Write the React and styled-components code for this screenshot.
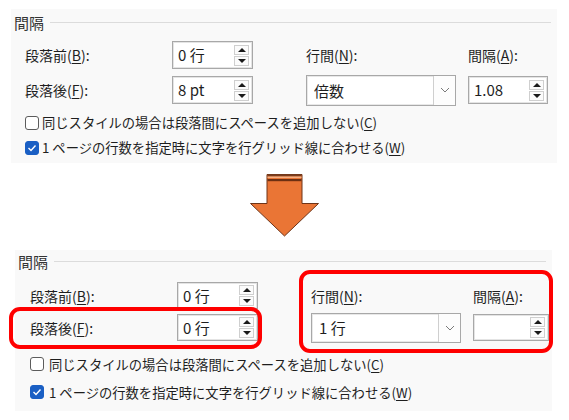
import React from "react";
import styled, { createGlobalStyle } from "styled-components";

const Global = createGlobalStyle`
  html, body { margin: 0; padding: 0; background: #ffffff; }
  body { font-family: "Noto Sans CJK JP", "Noto Sans", sans-serif; color: #1e1e1e; }
`;

const Page = styled.div`
  width: 569px;
  height: 420px;
  padding-top: 9px;
  box-sizing: border-box;
  display: flex;
  flex-direction: column;
  overflow: hidden;
`;

const Panel = styled.section`
  position: relative;
  margin-left: ${(p) => p.$left}px;
  width: ${(p) => p.$width}px;
  height: ${(p) => p.$height}px;
  background: #f9f9f9;
  box-sizing: border-box;
  flex-shrink: 0;
`;

const Legend = styled.div`
  display: flex;
  align-items: center;
  height: ${(p) => p.$h}px;
  padding-left: 3px;
  padding-right: 6px;
  gap: 6px;
  font-size: 15px;
  color: #333;
`;

const Rule = styled.div`
  flex: 1;
  height: 1px;
  background: #dcdcdc;
`;

const Grid = styled.div`
  display: grid;
  grid-template-columns: 147px 81px 53px 150px 12px 80px;
  grid-template-rows: ${(p) => p.$row}px ${(p) => p.$row}px;
  row-gap: ${(p) => p.$gap}px;
  margin-top: ${(p) => p.$top}px;
  padding-left: ${(p) => p.$pad}px;
  align-items: center;
`;

const Label = styled.div`
  font-size: 14px;
  line-height: 20px;
  white-space: nowrap;
  grid-column: ${(p) => p.$col};
  grid-row: ${(p) => p.$rowNum};
  u { text-decoration-thickness: 1px; text-underline-offset: 2px; }
`;

const Cell = styled.div`
  grid-column: ${(p) => p.$col};
  grid-row: ${(p) => p.$rowNum};
  display: flex;
  align-items: center;
  height: 100%;
`;

const SpinBox = styled.div`
  display: flex;
  align-items: center;
  width: ${(p) => p.$w}px;
  height: ${(p) => p.$h}px;
  box-sizing: border-box;
  border: 1px solid #a8a8a8;
  box-shadow: inset 0 0 0 1px #e4e4e4;
  background: #ffffff;
  padding-left: 5px;
  padding-right: 3px;
`;

const SpinValue = styled.span`
  flex: 1;
  font-size: 15px;
  line-height: 20px;
  white-space: nowrap;
`;

const SpinButtons = styled.div`
  display: flex;
  flex-direction: column;
  gap: 1px;
`;

const SpinBtn = styled.div`
  width: 15px;
  height: 10px;
  box-sizing: border-box;
  border: 1px solid #cfcfcf;
  background: #fbfbfb;
  display: flex;
  align-items: center;
  justify-content: center;
  &::after {
    content: "";
    width: 0;
    height: 0;
    border-left: 4px solid transparent;
    border-right: 4px solid transparent;
    ${(p) =>
      p.$down
        ? "border-top: 4px solid #1a1a1a;"
        : "border-bottom: 4px solid #1a1a1a;"}
  }
`;

const Select = styled.div`
  display: flex;
  width: 150px;
  height: ${(p) => p.$h}px;
  box-sizing: border-box;
  border: 1px solid #a8a8a8;
  box-shadow: inset 0 0 0 1px #e8e8e8;
  background: #ffffff;
`;

const SelectValue = styled.div`
  flex: 1;
  display: flex;
  align-items: center;
  padding-left: 7px;
  font-size: 15px;
`;

const SelectArrow = styled.div`
  width: 21px;
  border-left: 1px solid #cfcfcf;
  display: flex;
  align-items: center;
  justify-content: center;
  background: #fdfdfd;
`;

const Checks = styled.div`
  display: flex;
  flex-direction: column;
  margin-top: ${(p) => p.$top}px;
  padding-left: ${(p) => p.$pad}px;
`;

const CheckRow = styled.div`
  display: flex;
  align-items: center;
  height: ${(p) => p.$h}px;
  gap: ${(p) => p.$gap}px;
  font-size: 13.3px;
  white-space: nowrap;
  u { text-decoration-thickness: 1px; text-underline-offset: 2px; }
`;

const Box = styled.div`
  width: 14px;
  height: 14px;
  box-sizing: border-box;
  border-radius: 3px;
  flex-shrink: 0;
  display: flex;
  align-items: center;
  justify-content: center;
  border: 1px solid ${(p) => (p.$on ? "#1a5fc4" : "#5c5c5c")};
  background: ${(p) => (p.$on ? "#1a5fc4" : "#ffffff")};
`;

const ArrowWrap = styled.div`
  display: flex;
  justify-content: center;
  margin-top: 11px;
  margin-bottom: 13px;
  height: 63px;
  flex-shrink: 0;
`;

const RedFrame = styled.div`
  position: absolute;
  left: ${(p) => p.$x}px;
  top: ${(p) => p.$y}px;
  width: ${(p) => p.$w}px;
  height: ${(p) => p.$h}px;
  box-sizing: border-box;
  border: 4px solid #ff0000;
  border-radius: 11px;
  pointer-events: none;
`;

const Chevron = () => (
  <svg width="10" height="6" viewBox="0 0 10 6">
    <path d="M1 1 L5 5 L9 1" fill="none" stroke="#7a7a7a" strokeWidth="1" />
  </svg>
);

const Tick = () => (
  <svg width="10" height="8" viewBox="0 0 10 8">
    <path d="M1.5 4 L4 6.5 L8.5 1.5" fill="none" stroke="#ffffff" strokeWidth="1.4" />
  </svg>
);

const Spin = ({ value, w = 81, h = 28 }) => (
  <SpinBox $w={w} $h={h}>
    <SpinValue>{value}</SpinValue>
    <SpinButtons>
      <SpinBtn />
      <SpinBtn $down />
    </SpinButtons>
  </SpinBox>
);

const Check = ({ on, children, h, gap }) => (
  <CheckRow $h={h} $gap={gap}>
    <Box $on={on}>{on && <Tick />}</Box>
    <span>{children}</span>
  </CheckRow>
);

const SpacingPanel = ({ cfg, before, after, rule, amount }) => (
  <>
    <Legend $h={cfg.legendH}>
      <span>間隔</span>
      <Rule />
    </Legend>
    <Grid $row={cfg.row} $gap={cfg.gap} $top={cfg.gridTop} $pad={cfg.pad}>
      <Label $col={1} $rowNum={1}>
        段落前(<u>B</u>):
      </Label>
      <Cell $col={2} $rowNum={1}>
        <Spin value={before} h={cfg.row} />
      </Cell>
      <Label $col={4} $rowNum={1}>
        行間(<u>N</u>):
      </Label>
      <Label $col={6} $rowNum={1}>
        間隔(<u>A</u>):
      </Label>
      <Label $col={1} $rowNum={2}>
        段落後(<u>F</u>):
      </Label>
      <Cell $col={2} $rowNum={2}>
        <Spin value={after} h={cfg.row} />
      </Cell>
      <Cell $col={4} $rowNum={2}>
        <Select $h={cfg.selectH}>
          <SelectValue>{rule}</SelectValue>
          <SelectArrow>
            <Chevron />
          </SelectArrow>
        </Select>
      </Cell>
      <Cell $col={6} $rowNum={2}>
        <Spin value={amount} w={cfg.amountW} h={cfg.row} />
      </Cell>
    </Grid>
    <Checks $top={cfg.checkTop} $pad={cfg.pad}>
      <Check h={cfg.checkH} gap={cfg.checkGap}>
        同じスタイルの場合は段落間にスペースを追加しない(<u>C</u>)
      </Check>
      <Check on h={cfg.checkH} gap={cfg.checkGap}>
        1 ページの行数を指定時に文字を行グリッド線に合わせる(<u>W</u>)
      </Check>
    </Checks>
  </>
);

const DownArrow = () => (
  <svg width="71" height="63" viewBox="0 0 71 63">
    <path
      d="M18 0.5 H53 V29.5 H69.5 L35.5 62 L1.5 29.5 H18 Z"
      fill="#ea7535"
      stroke="#6e3418"
      strokeWidth="1"
    />
    <rect x="18.5" y="0.5" width="34" height="2" fill="#7a3c1c" />
    <rect x="18.5" y="2.5" width="34" height="1.5" fill="#f6b184" />
    <rect x="18.5" y="5" width="34" height="2.2" fill="#6b2f12" />
  </svg>
);

const top = {
  legendH: 26,
  row: 28,
  gap: 7,
  gridTop: 6,
  pad: 14,
  selectH: 31,
  amountW: 80,
  checkTop: 6,
  checkH: 25,
  checkGap: 3,
};

const bottom = {
  legendH: 22,
  row: 27,
  gap: 5,
  gridTop: 10,
  pad: 15,
  selectH: 30,
  amountW: 76,
  checkTop: 9,
  checkH: 28,
  checkGap: 5,
};

export default function App() {
  return (
    <>
      <Global />
      <Page>
        <Panel $left={11} $width={546} $height={154}>
          <SpacingPanel cfg={top} before="0 行" after="8 pt" rule="倍数" amount="1.08" />
        </Panel>
        <ArrowWrap>
          <DownArrow />
        </ArrowWrap>
        <Panel $left={15} $width={537} $height={161}>
          <SpacingPanel cfg={bottom} before="0 行" after="0 行" rule="1 行" amount="" />
          <RedFrame $x={-6} $y={57} $w={253} $h={42} />
          <RedFrame $x={284} $y={20} $w={254} $h={83} />
        </Panel>
      </Page>
    </>
  );
}
